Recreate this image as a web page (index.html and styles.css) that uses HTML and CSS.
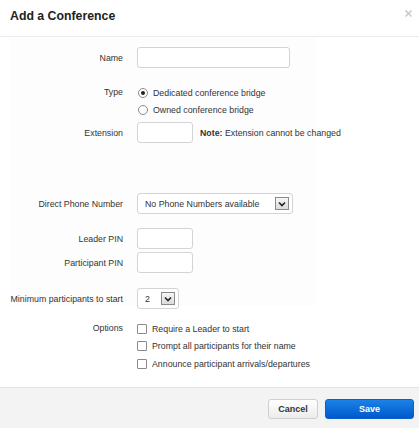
FILE: index.html
```html
<!DOCTYPE html>
<html>
<head>
<meta charset="utf-8">
<link rel="stylesheet" href="styles.css">
</head>
<body>
<div class="modal">
  <div class="header">
    <h1 class="title">Add a Conference</h1>
    <svg class="close" width="7" height="7" viewBox="0 0 7 7"><path d="M0.5 0.5L6.5 6.5M6.5 0.5L0.5 6.5" stroke="#c4c4c4" stroke-width="1.4"/></svg>
  </div>
  <div class="body">
    <div class="panel">
      <div class="row r-name">
        <label class="lbl">Name</label>
        <div class="input w-name"></div>
      </div>
      <div class="row r-type">
        <label class="lbl lbl-top">Type</label>
        <div class="stack">
          <div class="opt"><span class="radio on"></span>Dedicated conference bridge</div>
          <div class="opt"><span class="radio"></span>Owned conference bridge</div>
        </div>
      </div>
      <div class="row r-ext">
        <label class="lbl">Extension</label>
        <div class="input w-small"></div>
        <span class="note"><b>Note:</b> Extension cannot be changed</span>
      </div>
      <div class="row r-phone">
        <label class="lbl">Direct Phone Number</label>
        <div class="select w-phone"><span class="sel-text">No Phone Numbers available</span><span class="arrow"><svg width="8" height="6" viewBox="0 0 8 6"><path d="M1 1.5L4 4.5L7 1.5" fill="none" stroke="#222" stroke-width="1.6"/></svg></span></div>
      </div>
      <div class="row r-leader">
        <label class="lbl">Leader PIN</label>
        <div class="input w-small"></div>
      </div>
      <div class="row r-part">
        <label class="lbl">Participant PIN</label>
        <div class="input w-small"></div>
      </div>
      <div class="row r-min">
        <label class="lbl">Minimum participants to start</label>
        <div class="select w-min"><span class="sel-text">2</span><span class="arrow"><svg width="8" height="6" viewBox="0 0 8 6"><path d="M1 1.5L4 4.5L7 1.5" fill="none" stroke="#222" stroke-width="1.6"/></svg></span></div>
      </div>
    </div>
    <div class="row r-options">
      <label class="lbl lbl-top2">Options</label>
      <div class="stack">
        <div class="opt2"><span class="check"></span>Require a Leader to start</div>
        <div class="opt2"><span class="check"></span>Prompt all participants for their name</div>
        <div class="opt2"><span class="check"></span>Announce participant arrivals/departures</div>
      </div>
    </div>
  </div>
  <div class="footer">
    <button class="btn cancel">Cancel</button>
    <button class="btn save">Save</button>
  </div>
</div>
</body>
</html>
```
FILE: styles.css
```css
* { box-sizing: border-box; }
html, body { margin: 0; padding: 0; background: #fff; }
body {
  font-family: "Liberation Sans", Arial, Helvetica, sans-serif;
  font-size: 8.8px;
  color: #333;
}
.modal {
  width: 419px;
  height: 428px;
  display: flex;
  flex-direction: column;
  background: #fff;
}
.header {
  height: 37px;
  border-bottom: 1px solid #ebebeb;
  display: flex;
  align-items: flex-start;
  justify-content: space-between;
  padding: 8px 7px 0 10px;
}
.title {
  margin: 0;
  font-size: 12.3px;
  font-weight: bold;
  color: #222;
  line-height: 16px;
}
.close { margin-top: 2px; }
.body {
  flex: 1;
}
.panel {
  margin-left: 10px;
  width: 306px;
  padding-top: 10px;
  background: #fdfdfd;
  height: 269px;
}
.row {
  display: flex;
  align-items: center;
  white-space: nowrap;
}
.lbl {
  width: 113px;
  text-align: right;
  margin-right: 14px;
  flex: none;
  white-space: nowrap;
}
.r-options .lbl { width: 123px; }
.lbl-top { align-self: flex-start; line-height: 17px; }
.lbl-top2 { align-self: flex-start; line-height: 17.5px; }
.input {
  height: 21px;
  border: 1px solid #d4d4d4;
  border-radius: 3px;
  background: #fff;
  flex: none;
}
.w-name { width: 153px; }
.w-small { width: 56px; }
.note { margin-left: 7px; flex: none; }
.stack { display: flex; flex-direction: column; }
.opt { height: 17px; display: flex; align-items: center; }
.opt2 { height: 17.5px; display: flex; align-items: center; }
.radio {
  width: 10px; height: 10px;
  border: 1px solid #8a8a8a;
  border-radius: 50%;
  margin: 0 5px 0 1px;
  background: #fff;
  display: flex; align-items: center; justify-content: center;
}
.radio.on::after {
  content: "";
  width: 4px; height: 4px; border-radius: 50%;
  background: #222;
}
.check {
  width: 10px; height: 10px;
  border: 1px solid #8a8a8a;
  border-radius: 1px;
  margin: 0 5px 0 0;
  background: #fff;
}
.select {
  height: 21px;
  border: 1px solid #d4d4d4;
  border-radius: 3px;
  background: #fff;
  display: flex;
  align-items: center;
  justify-content: space-between;
  padding: 0 3px 0 7px;
  flex: none;
}
.w-phone { width: 156px; }
.w-min { width: 42px; }
.arrow {
  width: 14px; height: 13px;
  border: 1px solid #8a8a8a;
  background: linear-gradient(#f6f6f6, #dcdcdc);
  display: flex; align-items: center; justify-content: center;
}
.r-name { margin-top: 0; }
.r-type { margin-top: 16px; }
.r-ext { margin-top: 4px; }
.r-phone { margin-top: 50px; }
.r-leader { margin-top: 14px; }
.r-part { margin-top: 3px; }
.r-min { margin-top: 15px; }
.r-options { margin-top: 14px; }
.footer {
  height: 41px;
  border-top: 1px solid #e3e3e3;
  background: #f3f3f3;
  display: flex;
  justify-content: flex-end;
  align-items: flex-start;
  padding: 11px 5px 0 0;
  gap: 7px;
}
.btn {
  height: 20px;
  border-radius: 3px;
  font-family: "Liberation Sans", Arial, sans-serif;
  font-size: 9px;
  font-weight: bold;
  padding: 0;
  cursor: pointer;
}
.cancel {
  width: 50px;
  border: 1px solid #cfcfcf;
  background: linear-gradient(#ffffff, #ececec);
  color: #333;
}
.save {
  width: 89px;
  border: 1px solid #0d5fc4;
  background: linear-gradient(#1b82e6, #0058cc);
  color: #fff;
}
```
